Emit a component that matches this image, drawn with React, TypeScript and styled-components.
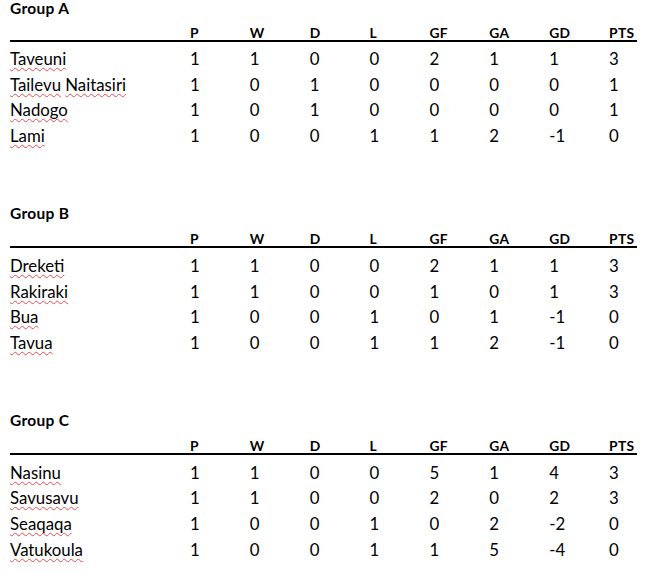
import React from 'react';
import styled, { createGlobalStyle, css } from 'styled-components';

const Global = createGlobalStyle`
  html, body { margin: 0; padding: 0; background: #fff; }
  body { font-family: Lato, "Noto Sans", sans-serif; color: #000; }
`;

const columns = css`
  display: grid;
  grid-template-columns: 180px repeat(7, 59.86px) 28px;
  width: 627px;
`;

const Page = styled.main`
  display: flex;
  flex-direction: column;
  gap: 56.2px;
  padding: 0 0 0 10px;
  width: 663px;
  box-sizing: border-box;
`;

const Group = styled.section`
  display: flex;
  flex-direction: column;
`;

const Title = styled.h2<{ $first?: boolean }>`
  margin: 0 0 ${(p) => (p.$first ? 9.5 : 11.3)}px;
  font: 700 15.5px/16px Lato, "Noto Sans", sans-serif;
  letter-spacing: 0.3px;
`;

const Header = styled.div`
  ${columns};
  border-bottom: 2px solid #000;
  font: 700 13.8px/14px Lato, "Noto Sans", sans-serif;
  letter-spacing: 0.4px;
`;

const Body = styled.div`
  padding-top: 4.6px;
`;

const Row = styled.div`
  ${columns};
  height: 25.7px;
  font: 400 16.8px/25.7px Lato, "Noto Sans", sans-serif;
`;

const Cell = styled.span`
  white-space: nowrap;
`;

const Word = styled.span`
  text-decoration: underline wavy #ea4a4f;
  text-decoration-thickness: 1px;
  text-decoration-skip-ink: none;
  text-underline-offset: 2px;
`;

type Team = { name: string; v: number[] };
type GroupData = { title: string; teams: Team[] };

const HEADS = ['', 'P', 'W', 'D', 'L', 'GF', 'GA', 'GD', 'PTS'];

const DATA: GroupData[] = [
  {
    title: 'Group A',
    teams: [
      { name: 'Taveuni', v: [1, 1, 0, 0, 2, 1, 1, 3] },
      { name: 'Tailevu Naitasiri', v: [1, 0, 1, 0, 0, 0, 0, 1] },
      { name: 'Nadogo', v: [1, 0, 1, 0, 0, 0, 0, 1] },
      { name: 'Lami', v: [1, 0, 0, 1, 1, 2, -1, 0] },
    ],
  },
  {
    title: 'Group B',
    teams: [
      { name: 'Dreketi', v: [1, 1, 0, 0, 2, 1, 1, 3] },
      { name: 'Rakiraki', v: [1, 1, 0, 0, 1, 0, 1, 3] },
      { name: 'Bua', v: [1, 0, 0, 1, 0, 1, -1, 0] },
      { name: 'Tavua', v: [1, 0, 0, 1, 1, 2, -1, 0] },
    ],
  },
  {
    title: 'Group C',
    teams: [
      { name: 'Nasinu', v: [1, 1, 0, 0, 5, 1, 4, 3] },
      { name: 'Savusavu', v: [1, 1, 0, 0, 2, 0, 2, 3] },
      { name: 'Seaqaqa', v: [1, 0, 0, 1, 0, 2, -2, 0] },
      { name: 'Vatukoula', v: [1, 0, 0, 1, 1, 5, -4, 0] },
    ],
  },
];

const TeamName: React.FC<{ name: string }> = ({ name }) => {
  const words = name.split(' ');
  return (
    <Cell>
      {words.map((w, i) => (
        <React.Fragment key={i}>
          {i > 0 && ' '}
          <Word>{w}</Word>
        </React.Fragment>
      ))}
    </Cell>
  );
};

export default function App() {
  return (
    <>
      <Global />
      <Page>
        {DATA.map((g, gi) => (
          <Group key={g.title}>
            <Title $first={gi === 0}>{g.title}</Title>
            <Header>
              {HEADS.map((h, i) => (
                <Cell key={i}>{h}</Cell>
              ))}
            </Header>
            <Body>
              {g.teams.map((t) => (
                <Row key={t.name}>
                  <TeamName name={t.name} />
                  {t.v.map((n, i) => (
                    <Cell key={i}>{n}</Cell>
                  ))}
                </Row>
              ))}
            </Body>
          </Group>
        ))}
      </Page>
    </>
  );
}
